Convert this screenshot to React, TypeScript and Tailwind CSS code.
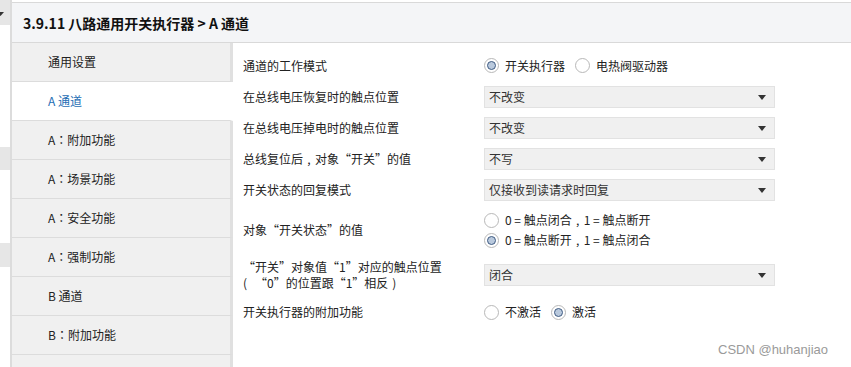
import React from "react";

const FONT = { fontFamily: '"Noto Sans CJK SC", sans-serif' };

function P({ c }: { c: string }) {
  return <span className="font-['Noto_Sans_CJK_TC']">{c}</span>;
}

function Box({ c, align }: { c: string; align: "left" | "center" }) {
  return (
    <span className={align === "left" ? "inline-block w-[12px] text-left" : "inline-block w-[12px] text-center"}>
      {c}
    </span>
  );
}

function Radio({ checked }: { checked?: boolean }) {
  return (
    <span className="flex h-[15px] w-[15px] shrink-0 items-center justify-center rounded-full border border-[#b8b8b8] bg-white">
      {checked && <span className="h-[9px] w-[9px] rounded-full border border-[#3f5b82] bg-[#b9c9dd]" />}
    </span>
  );
}

function Caret() {
  return (
    <svg width="8" height="5" viewBox="0 0 8 5">
      <path d="M0 0H8L4 5Z" fill="#333" />
    </svg>
  );
}

function Select({ value }: { value: string }) {
  return (
    <div className="flex h-[22px] w-[291px] items-center justify-between border border-[#e2e2e2] bg-[#f0f0f0] pl-[4px] pr-[8px] text-[#333]">
      <span>{value}</span>
      <Caret />
    </div>
  );
}

function RadioOpt({ checked, children }: { checked?: boolean; children: React.ReactNode }) {
  return (
    <div className="flex items-center gap-[6px]">
      <Radio checked={checked} />
      <span>{children}</span>
    </div>
  );
}

const items: React.ReactNode[] = [
  "通用设置",
  "A 通道",
  <>A<P c="：" />附加功能</>,
  <>A<P c="：" />场景功能</>,
  <>A<P c="：" />安全功能</>,
  <>A<P c="：" />强制功能</>,
  "B 通道",
  <>B<P c="：" />附加功能</>,
  "",
];

export default function App() {
  return (
    <div
      className="relative flex h-[367px] w-[851px] overflow-hidden bg-white text-[12px] leading-[16px] text-[#222]"
      style={FONT}
    >
      {/* left strip */}
      <div className="flex w-[10px] shrink-0 flex-col">
        <div className="flex h-[25px] items-start bg-[#e6e6e6] pt-[12px]">
          <svg width="4" height="4" viewBox="0 0 4 4">
            <path d="M-3 0H4L0.5 4Z" fill="#333" />
          </svg>
        </div>
        <div className="h-[122px]" />
        <div className="h-[23px] bg-[#e6e6e6]" />
        <div className="h-[73px]" />
        <div className="h-[24px] bg-[#e6e6e6]" />
      </div>
      <div className="w-[2px] shrink-0 bg-[#dcdcdc]" />

      {/* main */}
      <div className="flex min-w-0 flex-1 flex-col pt-[2px]">
        <div className="flex h-[41px] shrink-0 items-center border-y border-[#d9d9d9] bg-[#f4f5f7] pl-[11px] text-[14px] font-bold text-[#111]">
          3.9.11 八路通用开关执行器 &gt; A 通道
        </div>
        <div className="flex min-h-0 flex-1">
          {/* sidebar */}
          <div className="flex w-[221px] shrink-0 flex-col">
            {items.map((t, i) => {
              const sel = i === 1;
              return (
                <div
                  key={i}
                  className={
                    sel
                      ? "flex h-[39px] shrink-0 items-center border-b border-r-[3px] border-b-[#dcdcdc] border-r-white bg-white pl-[36px] text-[#1e6db4]"
                      : "flex h-[39px] shrink-0 items-center border-b border-r-[3px] border-b-[#dcdcdc] border-r-[#e0e0e0] bg-[#f0f0f0] pl-[36px] text-[#222]"
                  }
                >
                  {t}
                </div>
              );
            })}
          </div>

          {/* content */}
          <div className="flex flex-1 flex-col gap-[9px] pl-[10px] pt-[11px]">
            <div className="flex h-[23px] items-center">
              <div className="w-[241px] shrink-0">通道的工作模式</div>
              <div className="flex items-center gap-[10px]">
                <RadioOpt checked>开关执行器</RadioOpt>
                <RadioOpt>电热阀驱动器</RadioOpt>
              </div>
            </div>
            <div className="flex h-[22px] items-center">
              <div className="w-[241px] shrink-0">在总线电压恢复时的触点位置</div>
              <Select value="不改变" />
            </div>
            <div className="flex h-[22px] items-center">
              <div className="w-[241px] shrink-0">在总线电压掉电时的触点位置</div>
              <Select value="不改变" />
            </div>
            <div className="flex h-[22px] items-center">
              <div className="w-[241px] shrink-0">
                总线复位后<Box c="," align="center" />对象“开关”的值
              </div>
              <Select value="不写" />
            </div>
            <div className="flex h-[22px] items-center">
              <div className="w-[241px] shrink-0">开关状态的回复模式</div>
              <Select value="仅接收到读请求时回复" />
            </div>
            <div className="flex h-[40px] items-center">
              <div className="w-[241px] shrink-0">对象“开关状态”的值</div>
              <div className="flex flex-col">
                <div className="flex h-[20px] items-center">
                  <RadioOpt>
                    0 = 触点闭合<Box c="," align="center" />1 = 触点断开
                  </RadioOpt>
                </div>
                <div className="flex h-[20px] items-center">
                  <RadioOpt checked>
                    0 = 触点断开<Box c="," align="center" />1 = 触点闭合
                  </RadioOpt>
                </div>
              </div>
            </div>
            <div className="flex h-[32px] items-center">
              <div className="w-[241px] shrink-0">
                <div>“开关”对象值“1”对应的触点位置</div>
                <div>
                  <Box c="(" align="left" />“0”的位置跟“1”相反<Box c=")" align="center" />
                </div>
              </div>
              <Select value="闭合" />
            </div>
            <div className="mt-[1px] flex h-[22px] items-center">
              <div className="w-[241px] shrink-0">开关执行器的附加功能</div>
              <div className="flex items-center gap-[10px]">
                <RadioOpt>不激活</RadioOpt>
                <RadioOpt checked>激活</RadioOpt>
              </div>
            </div>
          </div>
        </div>
      </div>

      <div
        className="absolute left-[718px] top-[342px] text-[13px] leading-[16px] text-[#9a9a9a]"
        style={{ fontFamily: '"Liberation Sans", Arial, sans-serif' }}
      >
        CSDN @huhanjiao
      </div>
    </div>
  );
}
